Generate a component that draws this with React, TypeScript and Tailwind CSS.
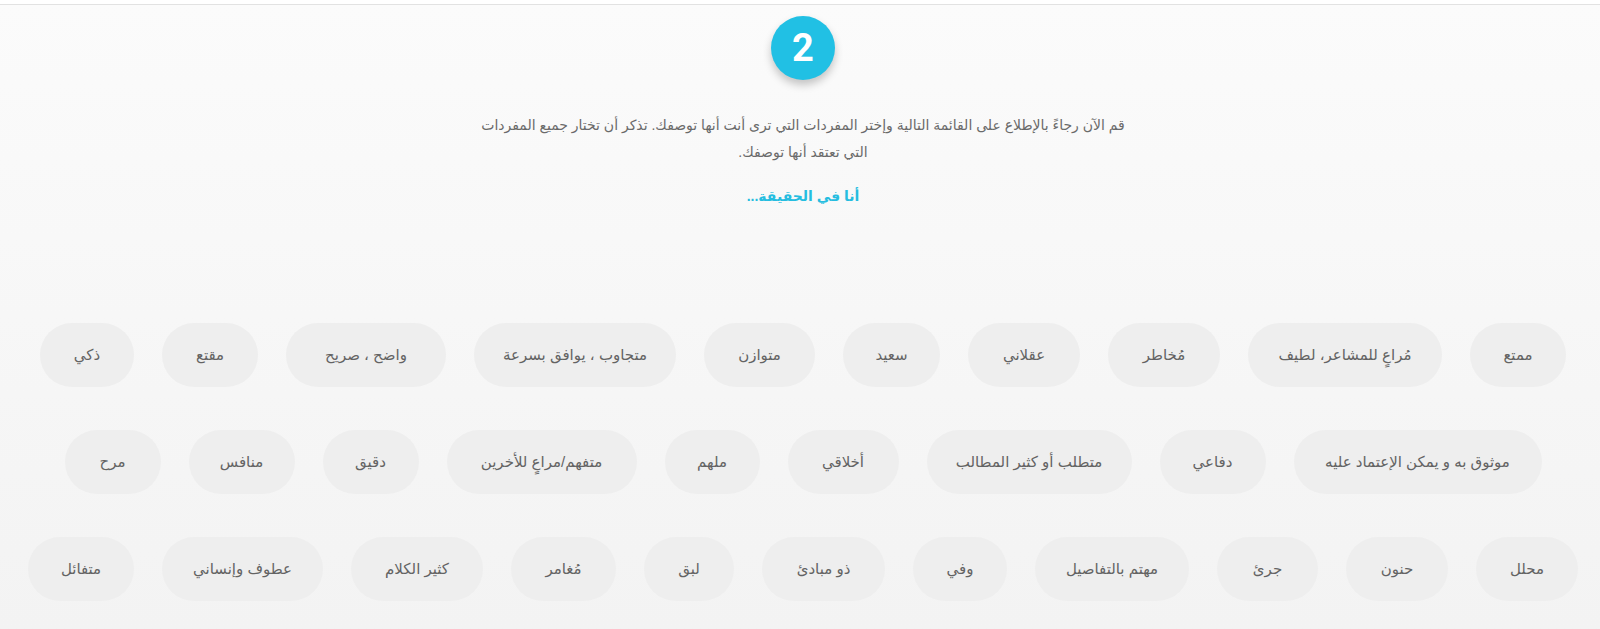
const rows: { label: string; w: string }[][] = [
  [
    { label: 'ممتع', w: 'w-[96px]' },
    { label: 'مُراعٍ للمشاعر، لطيف', w: 'w-[194px]' },
    { label: 'مُخاطر', w: 'w-[112px]' },
    { label: 'عقلاني', w: 'w-[112px]' },
    { label: 'سعيد', w: 'w-[97px]' },
    { label: 'متوازن', w: 'w-[111px]' },
    { label: 'متجاوب ، يوافق بسرعة', w: 'w-[202px]' },
    { label: 'واضح ، صريح', w: 'w-[160px]' },
    { label: 'مقتع', w: 'w-[96px]' },
    { label: 'ذكي', w: 'w-[94px]' },
  ],
  [
    { label: 'موثوق به و يمكن الإعتماد عليه', w: 'w-[248px]' },
    { label: 'دفاعي', w: 'w-[106px]' },
    { label: 'متطلب أو كثير المطالب', w: 'w-[205px]' },
    { label: 'أخلاقي', w: 'w-[111px]' },
    { label: 'ملهم', w: 'w-[95px]' },
    { label: 'متفهم/مراعٍ للأخرين', w: 'w-[190px]' },
    { label: 'دقيق', w: 'w-[96px]' },
    { label: 'منافس', w: 'w-[106px]' },
    { label: 'مرح', w: 'w-[96px]' },
  ],
  [
    { label: 'محلل', w: 'w-[102px]' },
    { label: 'حنون', w: 'w-[102px]' },
    { label: 'جرئ', w: 'w-[101px]' },
    { label: 'مهتم بالتفاصيل', w: 'w-[154px]' },
    { label: 'وفي', w: 'w-[94px]' },
    { label: 'ذو مبادئ', w: 'w-[123px]' },
    { label: 'لبق', w: 'w-[90px]' },
    { label: 'مُغامر', w: 'w-[105px]' },
    { label: 'كثير الكلام', w: 'w-[132px]' },
    { label: 'عطوف وإنساني', w: 'w-[161px]' },
    { label: 'متفائل', w: 'w-[106px]' },
  ],
];

export default function App() {
  return (
    <div
      dir="rtl"
      className="min-h-[629px] w-full bg-white font-['Liberation_Sans','DejaVu_Sans',sans-serif]"
    >
      <div className="h-[5px] border-b border-[#e2e2e2] bg-white" />
      <div className="flex min-h-[624px] flex-col items-center bg-gradient-to-b from-[#fbfbfb] to-[#f3f3f3] pl-[6px]">
        <div className="mt-[11px] flex h-[64px] w-[64px] items-center justify-center rounded-full bg-[#21c0e4] shadow-[0_5px_9px_rgba(0,0,0,0.22)]">
          <span className="font-['Roboto',sans-serif] text-[38px] font-bold leading-none text-white">2</span>
        </div>

        <p className="mt-[32px] text-center text-[14px] leading-[27px] text-[#6a6a6a]">
          قم الآن رجاءً بالإطلاع على القائمة التالية وإختر المفردات التي ترى أنت أنها توصفك. تذكر أن تختار جميع المفردات
          <br />
          التي تعتقد أنها توصفك.
        </p>

        <p className="mt-[20px] text-[14px] font-bold leading-[20px] text-[#25bde0]">أنا في الحقيقة...</p>

        <div className="mt-[117px] flex flex-col gap-[43px]">
          {rows.map((row, i) => (
            <div key={i} className="flex justify-center gap-[28px]">
              {row.map((p) => (
                <div
                  key={p.label}
                  className={`${p.w} flex h-[64px] shrink-0 items-center justify-center whitespace-nowrap rounded-full bg-[#eeeeee] text-[15px] text-[#636363]`}
                >
                  {p.label}
                </div>
              ))}
            </div>
          ))}
        </div>
      </div>
    </div>
  );
}
